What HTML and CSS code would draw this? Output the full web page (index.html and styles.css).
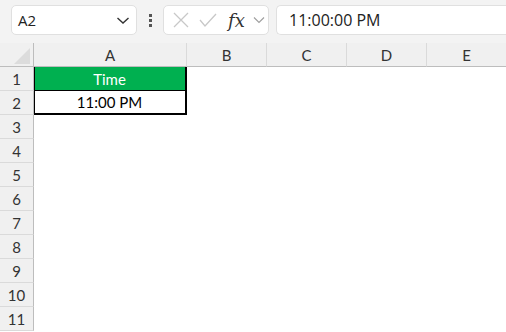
FILE: index.html
```html
<!DOCTYPE html>
<html lang="en">
<head>
    <meta charset="UTF-8">
    <title>Time</title>
    <link rel="stylesheet" href="styles.css">
</head>
<body>
    <div class="toolbar">
        <div class="namebox">
            <span>A2</span>
            <svg class="chev" width="14" height="9" viewBox="0 0 14 9"><path d="M1.5 2 L7 7 L12.5 2" fill="none" stroke="#333" stroke-width="1.4"/></svg>
        </div>
        <div class="dots"><i></i><i></i><i></i></div>
        <div class="fxbox">
            <svg width="18" height="18" viewBox="0 0 18 18"><path d="M2 2 L16 16 M16 2 L2 16" stroke="#c8c8c8" stroke-width="1.3"/></svg>
            <svg width="20" height="18" viewBox="0 0 20 18"><path d="M2 9 L7 15 L18 3" fill="none" stroke="#c8c8c8" stroke-width="1.3"/></svg>
            <span class="fx">fx</span>
            <svg width="12" height="8" viewBox="0 0 12 8"><path d="M1 1.5 L6 6.5 L11 1.5" fill="none" stroke="#a0a0a0" stroke-width="1.2"/></svg>
        </div>
        <div class="formula">11:00:00 PM</div>
    </div>

    <div class="sheet">
        <div class="corner"><span></span></div>
        <div class="colhead">A</div>
        <div class="colhead">B</div>
        <div class="colhead">C</div>
        <div class="colhead">D</div>
        <div class="colhead">E</div>

        <div class="rowhead">1</div>
        <div class="cell title">Time</div>
        <div class="cell"></div><div class="cell"></div><div class="cell"></div><div class="cell"></div>

        <div class="rowhead">2</div>
        <div class="cell value">11:00 PM</div>
        <div class="cell"></div><div class="cell"></div><div class="cell"></div><div class="cell"></div>

        <div class="rowhead">3</div><div class="cell"></div><div class="cell"></div><div class="cell"></div><div class="cell"></div><div class="cell"></div>
        <div class="rowhead">4</div><div class="cell"></div><div class="cell"></div><div class="cell"></div><div class="cell"></div><div class="cell"></div>
        <div class="rowhead">5</div><div class="cell"></div><div class="cell"></div><div class="cell"></div><div class="cell"></div><div class="cell"></div>
        <div class="rowhead">6</div><div class="cell"></div><div class="cell"></div><div class="cell"></div><div class="cell"></div><div class="cell"></div>
        <div class="rowhead">7</div><div class="cell"></div><div class="cell"></div><div class="cell"></div><div class="cell"></div><div class="cell"></div>
        <div class="rowhead">8</div><div class="cell"></div><div class="cell"></div><div class="cell"></div><div class="cell"></div><div class="cell"></div>
        <div class="rowhead">9</div><div class="cell"></div><div class="cell"></div><div class="cell"></div><div class="cell"></div><div class="cell"></div>
        <div class="rowhead">10</div><div class="cell"></div><div class="cell"></div><div class="cell"></div><div class="cell"></div><div class="cell"></div>
        <div class="rowhead">11</div><div class="cell"></div><div class="cell"></div><div class="cell"></div><div class="cell"></div><div class="cell"></div>
    </div>
</body>
</html>
```

FILE: styles.css
```css
* {
    margin: 0;
    padding: 0;
    box-sizing: border-box;
}

body {
    width: 506px;
    height: 332px;
    overflow: hidden;
    background: #fff;
    font-family: "Open Sans", "Liberation Sans", sans-serif;
    color: #222;
}

/* 顶部工具栏 */
.toolbar {
    display: flex;
    align-items: flex-start;
    height: 43px;
    padding: 5px 0 0 11px;
    background: #f3f3f3;
}

.namebox {
    display: flex;
    align-items: center;
    justify-content: space-between;
    width: 126px;
    height: 30px;
    padding: 0 6px 0 6px;
    background: #fff;
    border: 1px solid #e0e0e0;
    border-radius: 5px;
    font-size: 15px;
}

.dots {
    display: flex;
    flex-direction: column;
    align-items: center;
    gap: 2px;
    width: 26px;
    padding-top: 9px;
}

.dots i {
    display: block;
    width: 3px;
    height: 3px;
    background: #555;
}

.fxbox {
    display: flex;
    align-items: center;
    gap: 8px;
    width: 106px;
    height: 30px;
    padding-left: 8px;
    background: #fff;
    border: 1px solid #e0e0e0;
    border-radius: 5px;
}

.fx {
    font-family: "DejaVu Serif", "Liberation Serif", serif;
    font-style: italic;
    font-size: 18px;
    color: #333;
    margin-left: 2px;
}

.formula {
    flex: 1;
    height: 30px;
    margin-left: 7px;
    padding-left: 12px;
    line-height: 28px;
    font-size: 16px;
    background: #fff;
    border: 1px solid #e0e0e0;
    border-right: 0;
    border-radius: 5px 0 0 5px;
}

/* 表格 */
.sheet {
    display: grid;
    grid-template-columns: 34px 153px 80px 80px 80px 80px;
    grid-template-rows: 24px repeat(11, 24px);
    font-family: "Lato", "Liberation Sans", sans-serif;
    font-size: 15px;
}

.corner {
    position: relative;
    background: #f0f0f0;
    border-right: 1px solid #bdbdbd;
    border-bottom: 1px solid #bdbdbd;
}

.corner span {
    position: absolute;
    right: 3px;
    bottom: 2px;
    width: 0;
    height: 0;
    border-left: 16px solid transparent;
    border-bottom: 16px solid #dcdcdc;
}

.colhead {
    display: flex;
    align-items: center;
    justify-content: center;
    background: #f0f0f0;
    color: #333;
    border-right: 1px solid #dadada;
    border-bottom: 1px solid #bdbdbd;
}

.rowhead {
    display: flex;
    align-items: center;
    justify-content: center;
    background: #f0f0f0;
    color: #333;
    border-right: 1px solid #bdbdbd;
    border-bottom: 1px solid #dadada;
}

.cell {
    background: #fff;
}

.title {
    display: flex;
    align-items: center;
    justify-content: center;
    background: #00b050;
    color: #fff;
    border-right: 2px solid #000;
    border-bottom: 1px solid #000;
    box-shadow: inset 1px 0 #000;
}

.value {
    display: flex;
    align-items: center;
    justify-content: center;
    color: #000;
    border-right: 2px solid #000;
    border-bottom: 2px solid #000;
    box-shadow: inset 1px 0 #000;
}
```
